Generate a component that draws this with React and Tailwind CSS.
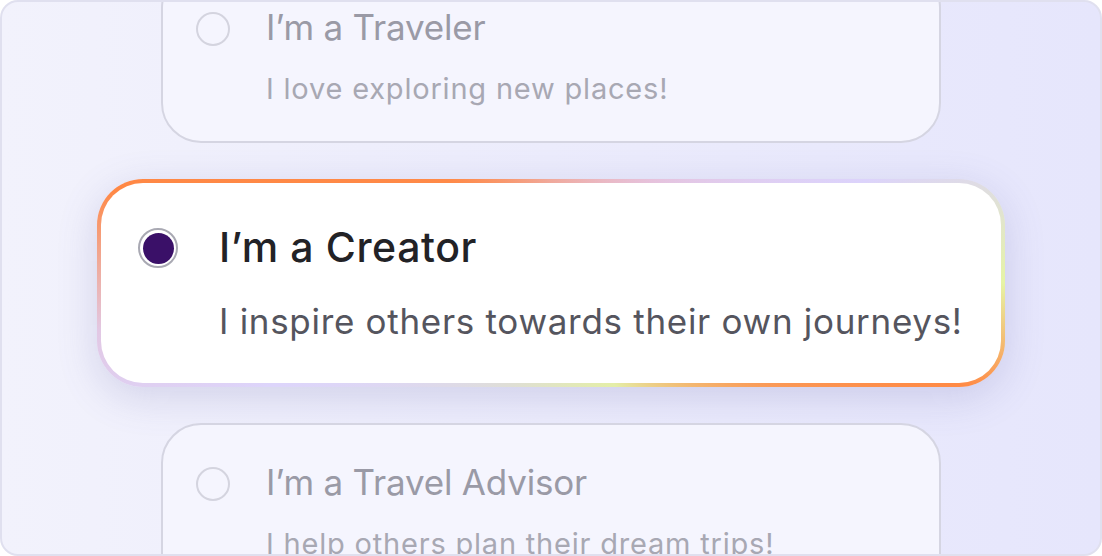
import React from "react";

function DimCard({ title, subtitle, className = "" }) {
  return (
    <div
      className={`shrink-0 w-[780px] h-[175px] rounded-[40px] border-2 border-[#d5d5e2] bg-[#f5f5fe] pl-[33px] pt-[42px] flex items-start gap-[36px] ${className}`}
    >
      <div className="shrink-0 w-[34px] h-[34px] rounded-full border-2 border-[#d4d4df]" />
      <div className="flex flex-col -mt-[5px]">
        <div className="text-[35px] leading-[40px] text-[#9a9aa6] tracking-[-0.2px]">{title}</div>
        <div className="mt-[24px] text-[29px] leading-[36px] text-[#a8a8b3] tracking-[0.8px]">{subtitle}</div>
      </div>
    </div>
  );
}

export default function App() {
  return (
    <div className="w-[1102px] h-[556px] bg-white font-['Inter',sans-serif]">
      <div className="w-full h-full rounded-[18px] border-2 border-[#e0e0ef] bg-gradient-to-r from-[#f2f2fc] to-[#e6e6fc] overflow-hidden flex flex-col items-center gap-[36px]">
        <DimCard
          className="-mt-[34px]"
          title="I’m a Traveler"
          subtitle="I love exploring new places!"
        />

        <div className="shrink-0 w-[908px] h-[208px] rounded-[46px] p-[4px] bg-[conic-gradient(from_0deg,#f0a99c_0deg,#e6c2dc_45deg,#dcd3fb_72deg,#e6f4a6_90deg,#ff8a45_104deg,#fa9a58_115deg,#f0c27a_130deg,#e4eea8_148deg,#dfdfd4_200deg,#ddd5fb_250deg,#e2c8e4_264deg,#ff8845_282deg,#ff8a48_315deg,#f0a99c_360deg)] shadow-[0_10px_40px_rgba(90,90,160,0.2)]">
          <div className="w-full h-full rounded-[42px] bg-white pl-[37px] pt-[45px] flex items-start gap-[41px]">
            <div className="shrink-0 w-[40px] h-[40px] rounded-full border-2 border-[#a9a9b3] flex items-center justify-center">
              <div className="w-[31px] h-[31px] rounded-full bg-[#3a1068]" />
            </div>
            <div className="flex flex-col -mt-[5px]">
              <div className="text-[41px] leading-[48px] font-medium text-[#222226] tracking-[0.6px]">I’m a Creator</div>
              <div className="mt-[29px] text-[35px] leading-[42px] text-[#55555e] tracking-[0.7px]">
                I inspire others towards their own journeys!
              </div>
            </div>
          </div>
        </div>

        <DimCard
          title="I’m a Travel Advisor"
          subtitle="I help others plan their dream trips!"
        />
      </div>
    </div>
  );
}
